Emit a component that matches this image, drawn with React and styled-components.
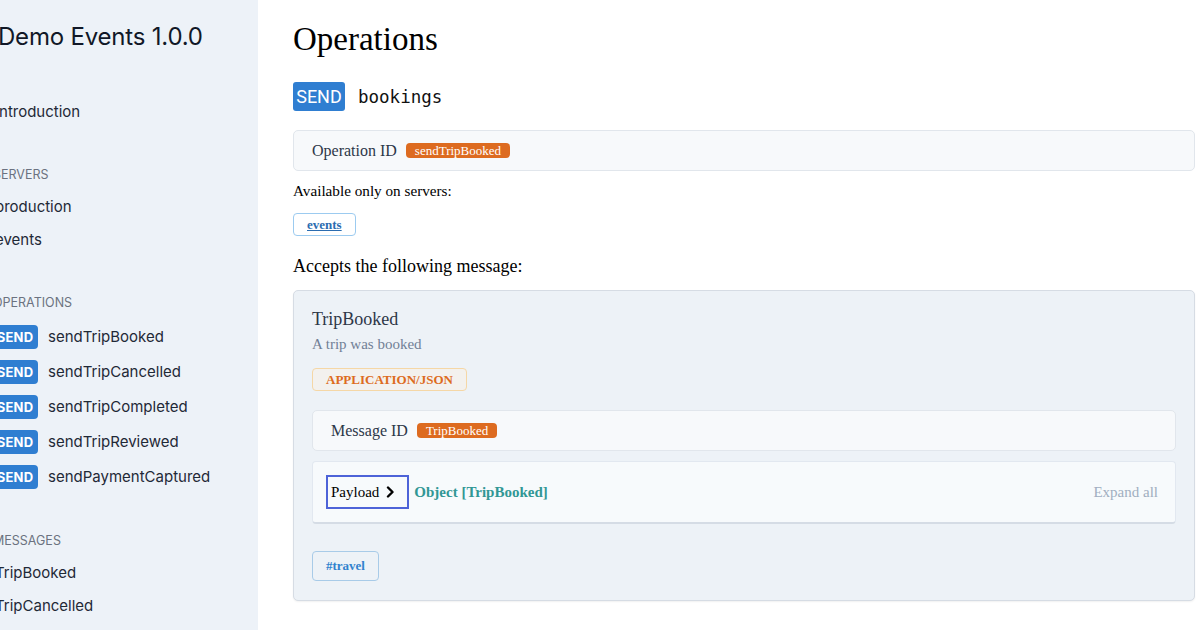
import React from "react";
import styled, { createGlobalStyle } from "styled-components";

const GlobalStyle = createGlobalStyle`
  html, body {
    margin: 0;
    padding: 0;
    background: #ffffff;
  }
  body {
    font-family: "Liberation Serif", "Times New Roman", serif;
    color: #000;
  }
`;

const Page = styled.div`
  display: flex;
  width: 1200px;
  height: 630px;
  overflow: hidden;
`;

/* sidebar - the screenshot is cropped, so the content runs off the left edge */
const Sidebar = styled.aside`
  flex: 0 0 258px;
  height: 630px;
  background: #edf2f8;
  overflow: hidden;
  font-family: Inter, "Noto Sans", sans-serif;
  color: #1f2937;
`;

const SideInner = styled.div`
  margin-left: -5px;
  padding-top: 21px;
`;

const Brand = styled.div`
  margin-left: 3px;
  font-size: 24px;
  line-height: 32px;
  letter-spacing: -0.2px;
  color: #111827;
`;

const Section = styled.div`
  margin-top: ${(p) => p.$top || 37}px;
`;

const SectionTitle = styled.div`
  font-size: 12.5px;
  line-height: 20px;
  text-transform: uppercase;
  color: #6b7280;
  margin-left: -2px;
  margin-bottom: ${(p) => p.$gap || 5}px;
`;

const NavItem = styled.div`
  font-size: 15px;
  line-height: 33px;
  color: #1f2937;
`;

const OpRow = styled.div`
  display: flex;
  align-items: center;
  gap: 10px;
  height: 35px;
  margin-left: -3px;
  font-size: 15px;
  color: #1f2937;
`;

const SideBadge = styled.span`
  display: inline-flex;
  align-items: center;
  justify-content: center;
  width: 46px;
  height: 24px;
  border-radius: 4px;
  background: #2f7ed1;
  color: #fff;
  font-weight: 700;
  font-size: 13px;
  letter-spacing: 0.2px;
`;

/* main */
const Main = styled.main`
  flex: 1;
  padding: 19px 5px 0 35px;
`;

const Title = styled.h1`
  margin: 0;
  font-size: 33px;
  line-height: 40px;
  font-weight: 400;
`;

const OpHeader = styled.div`
  display: flex;
  align-items: center;
  gap: 13px;
  margin-top: 23px;
`;

const SendTag = styled.span`
  display: inline-flex;
  align-items: center;
  justify-content: center;
  width: 52px;
  height: 29px;
  border-radius: 3px;
  background: #2f7ed1;
  color: #fff;
  font-family: Roboto, "Liberation Sans", sans-serif;
  font-size: 18px;
`;

const Channel = styled.span`
  font-family: "DejaVu Sans Mono", "Liberation Mono", monospace;
  font-size: 17.5px;
  color: #111;
`;

const IdBox = styled.div`
  display: flex;
  align-items: center;
  gap: 9px;
  height: 41px;
  box-sizing: border-box;
  margin-top: ${(p) => p.$top}px;
  padding-left: 18px;
  background: #f7f9fb;
  border: 1px solid #e1e6ec;
  border-radius: 5px;
  font-size: 16px;
  color: #2d3748;
`;

const IdBadge = styled.span`
  display: inline-flex;
  align-items: center;
  height: 15px;
  padding: 0 9px;
  border-radius: 4px;
  background: #dd6b20;
  color: #fff;
  font-size: 13px;
`;

const Note = styled.div`
  margin-top: 10px;
  font-size: 15.2px;
  line-height: 20px;
`;

const Chip = styled.span`
  display: inline-flex;
  align-items: center;
  justify-content: center;
  box-sizing: border-box;
  height: ${(p) => p.$h || 23}px;
  padding: 0 ${(p) => p.$px || 13}px;
  border: 1px solid ${(p) => p.$border};
  border-radius: 4px;
  background: ${(p) => p.$bg || "transparent"};
  color: ${(p) => p.$color};
  font-weight: 700;
  font-size: 13px;
  text-decoration: ${(p) => (p.$link ? "underline" : "none")};
`;

const ChipRow = styled.div`
  display: flex;
  margin-top: ${(p) => p.$top}px;
`;

const SubHeading = styled.div`
  margin-top: 18px;
  font-size: 18px;
  line-height: 24px;
`;

const MessageCard = styled.div`
  margin-top: 12px;
  padding: 16px 18px 19px 18px;
  background: #edf2f7;
  border: 1px solid #d6dce4;
  border-radius: 5px;
  box-shadow: 0 1px 2px rgba(0, 0, 0, 0.06);
`;

const MsgName = styled.div`
  font-size: 18px;
  line-height: 24px;
  color: #2d3748;
`;

const MsgSummary = styled.div`
  margin-top: 3px;
  font-size: 15px;
  line-height: 20px;
  color: #718096;
`;

const PayloadBox = styled.div`
  display: flex;
  align-items: center;
  height: 63px;
  box-sizing: border-box;
  margin-top: 10px;
  padding: 0 17px 0 13px;
  background: #f7fafc;
  border: 1px solid #e2e8f0;
  border-bottom: 2px solid #d5dce5;
  border-radius: 4px;
  font-size: 15px;
`;

const PayloadToggle = styled.button`
  display: flex;
  align-items: center;
  gap: 6px;
  height: 34px;
  box-sizing: border-box;
  padding: 0 12px 0 3px;
  background: transparent;
  border: 2px solid #4d63d8;
  font-family: "Liberation Serif", "Times New Roman", serif;
  font-size: 15px;
  color: #000;
`;

const TypeName = styled.span`
  margin-left: 5px;
  font-weight: 700;
  color: #319795;
`;

const ExpandAll = styled.span`
  margin-left: auto;
  color: #a0aec0;
`;

const operations = [
  "sendTripBooked",
  "sendTripCancelled",
  "sendTripCompleted",
  "sendTripReviewed",
  "sendPaymentCaptured",
];

function Chevron() {
  return (
    <svg width="10" height="12" viewBox="0 0 10 12" fill="none">
      <path d="M3 1.5 L7.5 6 L3 10.5" stroke="#000" strokeWidth="2.4" strokeLinecap="round" strokeLinejoin="round" />
    </svg>
  );
}

export default function App() {
  return (
    <Page>
      <GlobalStyle />
      <Sidebar>
        <SideInner>
          <Brand>Demo Events 1.0.0</Brand>
          <Section $top={42}>
            <NavItem>Introduction</NavItem>
          </Section>
          <Section $top={37}>
            <SectionTitle>Servers</SectionTitle>
            <NavItem>production</NavItem>
            <NavItem>events</NavItem>
          </Section>
          <Section $top={37}>
            <SectionTitle $gap={6}>Operations</SectionTitle>
            {operations.map((op) => (
              <OpRow key={op}>
                <SideBadge>SEND</SideBadge>
                {op}
              </OpRow>
            ))}
          </Section>
          <Section $top={37}>
            <SectionTitle>Messages</SectionTitle>
            <NavItem>TripBooked</NavItem>
            <NavItem>TripCancelled</NavItem>
          </Section>
        </SideInner>
      </Sidebar>

      <Main>
        <Title>Operations</Title>
        <OpHeader>
          <SendTag>SEND</SendTag>
          <Channel>bookings</Channel>
        </OpHeader>
        <IdBox $top={19}>
          Operation ID <IdBadge>sendTripBooked</IdBadge>
        </IdBox>
        <Note>Available only on servers:</Note>
        <ChipRow $top={12}>
          <Chip $border="#9ccbf0" $color="#2b6cb0" $bg="#fff" $px={13} $link>
            events
          </Chip>
        </ChipRow>
        <SubHeading>Accepts the following message:</SubHeading>
        <MessageCard>
          <MsgName>TripBooked</MsgName>
          <MsgSummary>A trip was booked</MsgSummary>
          <ChipRow $top={14}>
            <Chip $border="#f5d7a6" $color="#dd6b20" $bg="#f3f1ee" $px={13}>
              APPLICATION/JSON
            </Chip>
          </ChipRow>
          <IdBox $top={19}>
            Message ID <IdBadge>TripBooked</IdBadge>
          </IdBox>
          <PayloadBox>
            <PayloadToggle>
              Payload <Chevron />
            </PayloadToggle>
            <TypeName>Object [TripBooked]</TypeName>
            <ExpandAll>Expand all</ExpandAll>
          </PayloadBox>
          <ChipRow $top={27}>
            <Chip $h={30} $border="#a8cbe8" $color="#3182ce" $px={13}>
              #travel
            </Chip>
          </ChipRow>
        </MessageCard>
      </Main>
    </Page>
  );
}
